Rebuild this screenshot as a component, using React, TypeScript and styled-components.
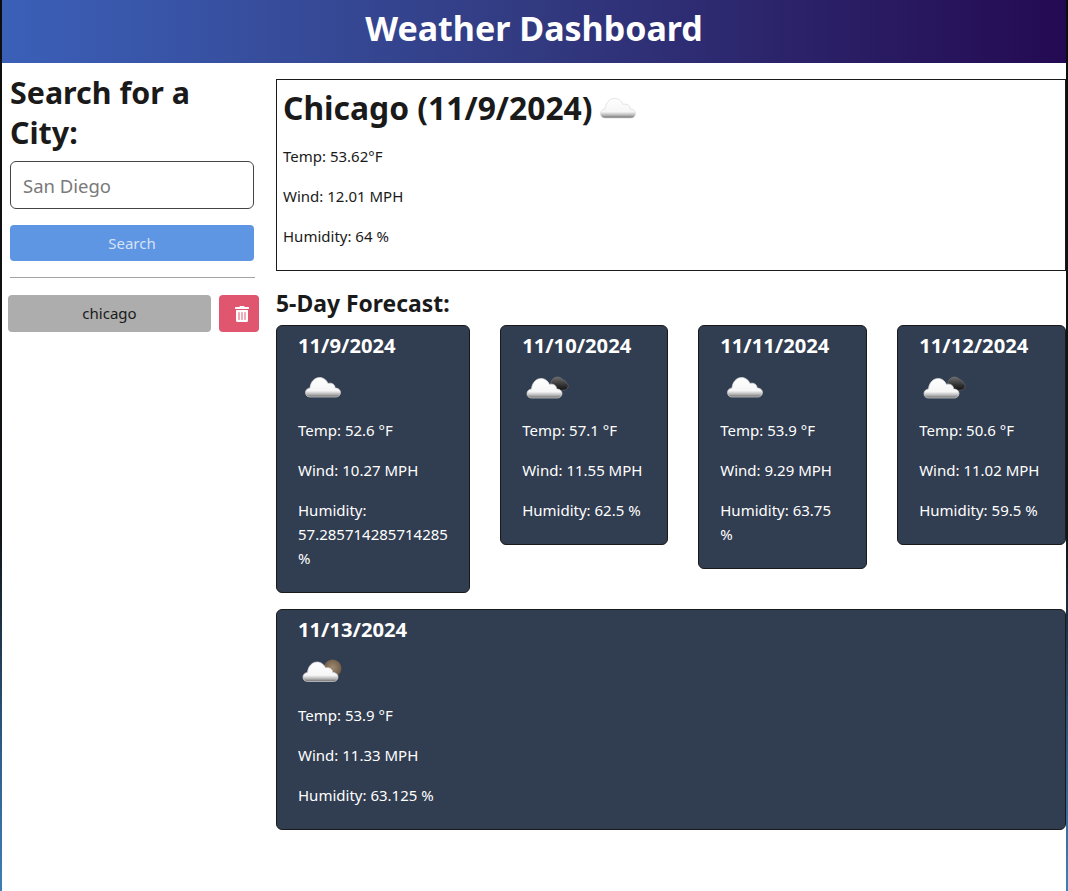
import { FC } from 'react'
import { FaTrashAlt } from 'react-icons/fa'
import styled, { createGlobalStyle } from 'styled-components'

type IconKind = 'cloud' | 'darkCloud' | 'moon'

type Forecast = {
  date: string
  icon: IconKind
  temp: string
  wind: string
  humidity: string
  width: number
  wide?: boolean
}

const forecast: Forecast[] = [
  { date: '11/9/2024', icon: 'cloud', temp: '52.6', wind: '10.27', humidity: '57.285714285714285', width: 194 },
  { date: '11/10/2024', icon: 'darkCloud', temp: '57.1', wind: '11.55', humidity: '62.5', width: 168 },
  { date: '11/11/2024', icon: 'cloud', temp: '53.9', wind: '9.29', humidity: '63.75', width: 168.8 },
  { date: '11/12/2024', icon: 'darkCloud', temp: '50.6', wind: '11.02', humidity: '59.5', width: 168.8 }
]

const lastDay: Forecast = {
  date: '11/13/2024',
  icon: 'moon',
  temp: '53.9',
  wind: '11.33',
  humidity: '63.125',
  width: 790,
  wide: true
}

const CLOUD_PATH =
  'M12 36C9 36 7.500 34 7.500 31.500C7.500 29 9.500 27.200 12 27C12.500 21 16.500 16.500 21.500 16.500C25.500 16.500 28.500 19 30 22.500C31 22 32.500 22 34 22.500C36 23.200 37 25 37.200 27C40.200 27 42.500 28.800 42.500 31.500C42.500 34 40.500 36 38 36Z'

// the front cloud sits a little further left when something is behind it
const CLOUD_SHIFT: Record<IconKind, string> = {
  cloud: 'translate(0 0)',
  darkCloud: 'translate(-2.500 1)',
  moon: 'translate(-2.500 0.500)'
}

const WeatherIcon: FC<{ kind: IconKind; id: string }> = ({ kind, id }) => (
  <svg width="50" height="50" viewBox="0 0 50 50" aria-hidden="true">
    <defs>
      <linearGradient id={`${id}-cloud`} x1="0" y1="0" x2="0" y2="1">
        <stop offset="0" stopColor="#ffffff" />
        <stop offset="0.68" stopColor="#f6f6f6" />
        <stop offset="0.86" stopColor="#b5b5b5" />
        <stop offset="1" stopColor="#6a6a6a" />
      </linearGradient>
      <linearGradient id={`${id}-dark`} x1="0" y1="0" x2="0" y2="1">
        <stop offset="0" stopColor="#6d6d6d" />
        <stop offset="0.6" stopColor="#303030" />
        <stop offset="1" stopColor="#111111" />
      </linearGradient>
      <radialGradient id={`${id}-moon`} cx="0.5" cy="0.45" r="0.6">
        <stop offset="0" stopColor="#a08a70" />
        <stop offset="0.75" stopColor="#75624c" />
        <stop offset="1" stopColor="#4f4234" />
      </radialGradient>
    </defs>
    {kind === 'darkCloud' && (
      <path
        d="M30 30C27 24 29 16.500 35 16C38 15.800 40 17.200 41 19C42.500 18.800 44 20 44 22C45.500 22.500 46.500 24 46 26C45.500 28 44 29 42 29Z"
        fill={`url(#${id}-dark)`}
        stroke="#777"
        strokeWidth="0.5"
      />
    )}
    {kind === 'moon' && <circle cx="34.500" cy="23.500" r="9" fill={`url(#${id}-moon)`} />}
    <path
      d={CLOUD_PATH}
      transform={CLOUD_SHIFT[kind]}
      fill={`url(#${id}-cloud)`}
      stroke="#d9d9d9"
      strokeWidth="0.7"
    />
  </svg>
)

const GlobalStyle = createGlobalStyle`
  html,
  body {
    height: 100%;
  }
  body {
    margin: 0;
    background: linear-gradient(to bottom, #0d0d0d 0%, #111417 60%, #2f5f8c 85%, #3f7fb5 100%);
    font-family: 'Noto Sans', 'Open Sans', 'Liberation Sans', sans-serif;
    font-size: 15px;
    line-height: 24px;
    color: #1a1a1a;
  }
  #root {
    margin: 0 2px;
    min-height: 100%;
    background: #fff;
  }
`

const Page = styled.div`
  display: flex;
  flex-direction: column;
  min-height: 891px;
`

const Header = styled.header`
  display: flex;
  align-items: center;
  justify-content: center;
  height: 63px;
  background: linear-gradient(90deg, #3b60b8 0%, #323a80 50%, #240a52 100%);
  color: #fff;
`

const Title = styled.h1`
  margin: 0 0 7px;
  font-size: 34px;
  line-height: 40px;
  font-weight: 700;
`

const Body = styled.div`
  display: flex;
`

const Sidebar = styled.aside`
  flex: none;
  box-sizing: border-box;
  width: 274px;
  padding: 10px 0 0 8px;
`

const SearchTitle = styled.h2`
  width: 244px;
  margin: 0 0 8px;
  font-size: 30.400px;
  line-height: 40px;
  font-weight: 700;
`

const CityInput = styled.input`
  display: block;
  box-sizing: border-box;
  width: 244px;
  height: 48px;
  padding: 0 12px;
  border: 1px solid #444;
  border-radius: 6px;
  background: #fff;
  font: inherit;
  font-size: 18.500px;
  color: #1a1a1a;

  &::placeholder {
    color: #7a7a7a;
    opacity: 1;
  }
`

const SearchButton = styled.button`
  display: block;
  width: 244px;
  height: 36px;
  margin-top: 16px;
  border: 0;
  border-radius: 4px;
  background: #5f96e4;
  font: inherit;
  color: #d5e2f6;
`

const Divider = styled.hr`
  width: 245px;
  height: 1px;
  margin: 16px 0 17px;
  border: 0;
  background: #a3a3a3;
`

const HistoryRow = styled.div`
  display: flex;
  gap: 8px;
  margin-left: -2px;
`

const CityButton = styled.button`
  width: 203px;
  height: 37px;
  padding: 0 0 2px;
  border: 0;
  border-radius: 4px;
  background: #adadad;
  font: inherit;
  color: #1a1a1a;
`

const DeleteButton = styled.button`
  display: flex;
  align-items: center;
  justify-content: center;
  width: 40px;
  height: 37px;
  padding: 0 0 0 6px;
  border: 0;
  border-radius: 4px;
  background: #e0566f;
  color: #fff;
  font-size: 16px;
`

const Main = styled.main`
  flex: none;
  width: 790px;
  padding-top: 16px;
`

const Today = styled.section`
  box-sizing: border-box;
  height: 192px;
  padding: 8px 6px 0;
  border: 1px solid #1a1a1a;
`

const TodayTitle = styled.h2`
  display: flex;
  align-items: center;
  height: 40px;
  margin: 0 0 16px;
  font-size: 31.800px;
  line-height: 40px;
  font-weight: 700;
  white-space: nowrap;
`

const TodayIcon = styled.span`
  display: flex;
  flex: none;
  margin: -2px 0 0 0;
`

const Stat = styled.p`
  margin: 0 0 16px;
`

const ForecastTitle = styled.h3`
  margin: 19px 0 7px;
  height: 28px;
  font-size: 22.900px;
  line-height: 28px;
  font-weight: 700;
`

const CardRow = styled.div`
  display: flex;
  flex-wrap: wrap;
  justify-content: space-between;
  align-items: flex-start;
  row-gap: 16px;
`

const Card = styled.article<{ $width: number }>`
  box-sizing: border-box;
  width: ${(p) => p.$width}px;
  padding: 7px 22px 6px 21px;
  border: 1px solid #1a1a1a;
  border-radius: 6px;
  background: #313d50;
  color: #fff;
`

const CardDate = styled.h4`
  margin: 0;
  font-size: 20.200px;
  line-height: 24px;
  font-weight: 700;
  white-space: nowrap;
`

const CardIcon = styled.div<{ $wide?: boolean }>`
  display: flex;
  height: ${(p) => (p.$wide ? 58 : 57)}px;
  margin-top: 4px;
`

const CardStat = styled.p`
  margin: 0 0 16px;
`

const ForecastCard: FC<{ day: Forecast }> = ({ day }) => (
  <Card $width={day.width}>
    <CardDate>{day.date}</CardDate>
    <CardIcon $wide={day.wide}>
      <WeatherIcon kind={day.icon} id={`icon-${day.date.replace(/\//g, '-')}`} />
    </CardIcon>
    <CardStat>Temp: {day.temp} °F</CardStat>
    <CardStat>Wind: {day.wind} MPH</CardStat>
    <CardStat>Humidity: {day.humidity} %</CardStat>
  </Card>
)

const App: FC = () => {
  return (
    <Page>
      <GlobalStyle />
      <Header>
        <Title>Weather Dashboard</Title>
      </Header>
      <Body>
        <Sidebar>
          <SearchTitle>Search for a City:</SearchTitle>
          <CityInput placeholder="San Diego" />
          <SearchButton>Search</SearchButton>
          <Divider />
          <HistoryRow>
            <CityButton>chicago</CityButton>
            <DeleteButton aria-label="delete">
              <FaTrashAlt />
            </DeleteButton>
          </HistoryRow>
        </Sidebar>
        <Main>
          <Today>
            <TodayTitle>
              Chicago (11/9/2024)
              <TodayIcon>
                <WeatherIcon kind="cloud" id="today" />
              </TodayIcon>
            </TodayTitle>
            <Stat>Temp: 53.62°F</Stat>
            <Stat>Wind: 12.01 MPH</Stat>
            <Stat>Humidity: 64 %</Stat>
          </Today>
          <ForecastTitle>5-Day Forecast:</ForecastTitle>
          <CardRow>
            {forecast.map((day) => (
              <ForecastCard key={day.date} day={day} />
            ))}
            <ForecastCard day={lastDay} />
          </CardRow>
        </Main>
      </Body>
    </Page>
  )
}

export default App
